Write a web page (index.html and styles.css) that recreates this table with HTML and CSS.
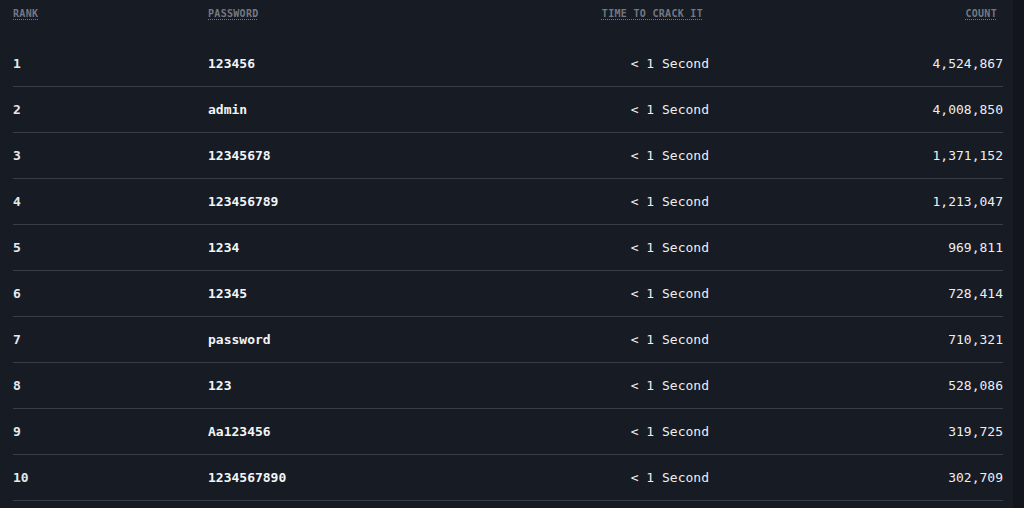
FILE: index.html
```html
<!DOCTYPE html>
<html lang="en">
<head>
<meta charset="utf-8">
<title>Top passwords</title>
<link rel="stylesheet" href="styles.css">
</head>
<body>
<div class="panel">
  <table class="pw-table">
    <colgroup>
      <col class="c-rank"><col class="c-pass"><col class="c-time"><col class="c-count">
    </colgroup>
    <thead>
      <tr>
        <th><abbr title="Rank">Rank</abbr></th>
        <th><abbr title="Password">Password</abbr></th>
        <th class="num"><abbr title="Time to crack it">Time to crack it</abbr></th>
        <th class="num"><abbr title="Count">Count</abbr></th>
      </tr>
    </thead>
    <tbody>
      <tr><td class="rank">1</td><td class="pass">123456</td><td class="num">&lt; 1 Second</td><td class="num">4,524,867</td></tr>
      <tr><td class="rank">2</td><td class="pass">admin</td><td class="num">&lt; 1 Second</td><td class="num">4,008,850</td></tr>
      <tr><td class="rank">3</td><td class="pass">12345678</td><td class="num">&lt; 1 Second</td><td class="num">1,371,152</td></tr>
      <tr><td class="rank">4</td><td class="pass">123456789</td><td class="num">&lt; 1 Second</td><td class="num">1,213,047</td></tr>
      <tr><td class="rank">5</td><td class="pass">1234</td><td class="num">&lt; 1 Second</td><td class="num">969,811</td></tr>
      <tr><td class="rank">6</td><td class="pass">12345</td><td class="num">&lt; 1 Second</td><td class="num">728,414</td></tr>
      <tr><td class="rank">7</td><td class="pass">password</td><td class="num">&lt; 1 Second</td><td class="num">710,321</td></tr>
      <tr><td class="rank">8</td><td class="pass">123</td><td class="num">&lt; 1 Second</td><td class="num">528,086</td></tr>
      <tr><td class="rank">9</td><td class="pass">Aa123456</td><td class="num">&lt; 1 Second</td><td class="num">319,725</td></tr>
      <tr><td class="rank">10</td><td class="pass">1234567890</td><td class="num">&lt; 1 Second</td><td class="num">302,709</td></tr>
    </tbody>
  </table>
</div>
</body>
</html>
```

FILE: styles.css
```css
html, body {
  margin: 0;
  padding: 0;
  background: #12151c;
  height: 100%;
}
body {
  font-family: "DejaVu Sans Mono", "Liberation Mono", monospace;
  color: #eef0f3;
}
.panel {
  width: 1013px;
  height: 100%;
  background: #171b24;
  padding: 0 10px 0 13px;
  box-sizing: border-box;
}
.pw-table {
  width: 990px;
  table-layout: fixed;
  border-collapse: collapse;
}
.c-rank { width: 195px; }
.c-pass { width: 206px; }
.c-time { width: 295px; }
.c-count { width: 294px; }

.pw-table th {
  height: 41px;
  padding: 0;
  text-align: left;
  vertical-align: top;
  font-size: 10px;
  font-weight: bold;
  line-height: 12px;
  color: #737882;
  text-transform: uppercase;
  letter-spacing: 0.3px;
}
.pw-table th abbr {
  display: inline-block;
  margin-top: 8px;
  text-decoration: underline dotted;
  text-underline-offset: 2px;
  text-decoration-color: #737882;
}
.pw-table th.num {
  text-align: right;
  padding-right: 6px;
}
.pw-table td {
  height: 45px;
  padding: 0;
  border-bottom: 1px solid #393d46;
  font-size: 13px;
  line-height: 16px;
  vertical-align: middle;
  color: #eceef1;
}
.pw-table td.rank {
  font-weight: bold;
  color: #e6e8ec;
}
.pw-table td.pass {
  font-weight: bold;
  color: #f3f4f6;
}
.pw-table td.num {
  text-align: right;
}
```
